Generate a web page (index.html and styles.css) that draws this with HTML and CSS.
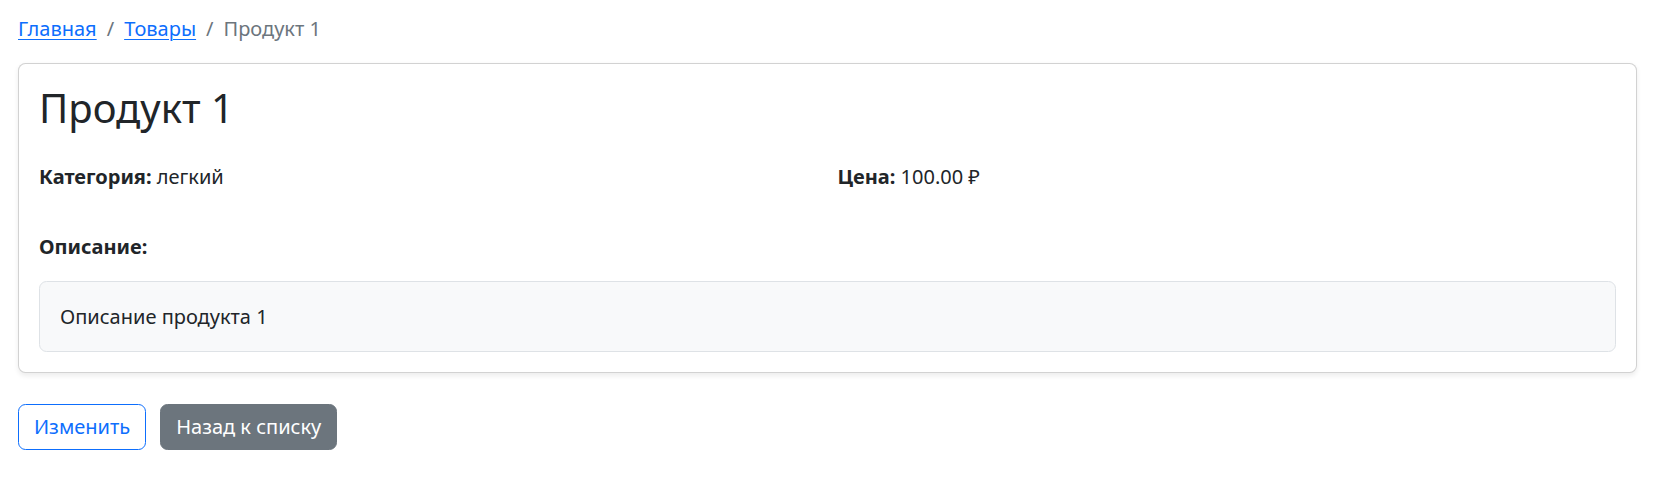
FILE: index.html
```html
<!DOCTYPE html>
<html lang="ru">
<head>
<meta charset="utf-8">
<title>Продукт 1</title>
<link rel="stylesheet" href="styles.css">
</head>
<body>
<main class="page">
  <nav class="breadcrumb">
    <a class="crumb-link" href="#">Главная</a>
    <span class="crumb-sep">/</span>
    <a class="crumb-link" href="#">Товары</a>
    <span class="crumb-sep">/</span>
    <span class="crumb-active">Продукт 1</span>
  </nav>

  <section class="card">
    <h1 class="title">Продукт 1</h1>
    <div class="info-row">
      <p class="info"><strong>Категория:</strong> легкий</p>
      <p class="info"><strong>Цена:</strong> 100.00 ₽</p>
    </div>
    <p class="desc-label"><strong>Описание:</strong></p>
    <div class="desc-box">Описание продукта 1</div>
  </section>

  <div class="actions">
    <a class="btn btn-outline" href="#">Изменить</a>
    <a class="btn btn-secondary" href="#">Назад к списку</a>
  </div>
</main>
</body>
</html>
```

FILE: styles.css
```css
* { box-sizing: border-box; }

html, body {
  margin: 0;
  padding: 0;
  background: #fff;
}

body {
  font-family: "Noto Sans", "DejaVu Sans", sans-serif;
  font-size: 20px;
  line-height: 30px;
  color: #212529;
}

.page {
  padding: 14px 20px 0 18px;
}

.breadcrumb {
  display: flex;
  align-items: baseline;
  margin-bottom: 19px;
  height: 30px;
}

.crumb-link {
  color: #0d6efd;
  text-decoration: underline;
  text-underline-offset: 3px;
  text-decoration-thickness: 1px;
}

.crumb-sep {
  color: #6c757d;
  padding: 0 10px;
}

.crumb-active {
  color: #6c757d;
}

.card {
  border: 1px solid rgba(0, 0, 0, 0.175);
  border-radius: 7.5px;
  box-shadow: 0 2.5px 5px rgba(0, 0, 0, 0.075);
  padding: 20px;
  background: #fff;
}

.title {
  margin: 0 0 30px;
  font-size: 40px;
  line-height: 48px;
  font-weight: 400;
  color: #212529;
}

.info-row {
  display: grid;
  grid-template-columns: 1fr 1fr;
  column-gap: 20px;
  margin-bottom: 40px;
}

.info {
  margin: 0;
}

.info strong,
.desc-label strong {
  font-weight: 700;
}

.desc-label {
  margin: 0 0 19px;
}

.desc-box {
  background: #f8f9fa;
  border: 1px solid #dee2e6;
  border-radius: 7.5px;
  padding: 19.5px 20px;
}

.actions {
  display: flex;
  gap: 14px;
  margin-top: 31px;
}

.btn {
  display: inline-block;
  padding: 7px 15px;
  border: 1px solid transparent;
  border-radius: 7.5px;
  line-height: 30px;
  font-size: 20px;
  text-decoration: none;
}

.btn-outline {
  color: #0d6efd;
  border-color: #0d6efd;
  background: #fff;
}

.btn-secondary {
  color: #fff;
  background: #6c757d;
  border-color: #6c757d;
}
```
